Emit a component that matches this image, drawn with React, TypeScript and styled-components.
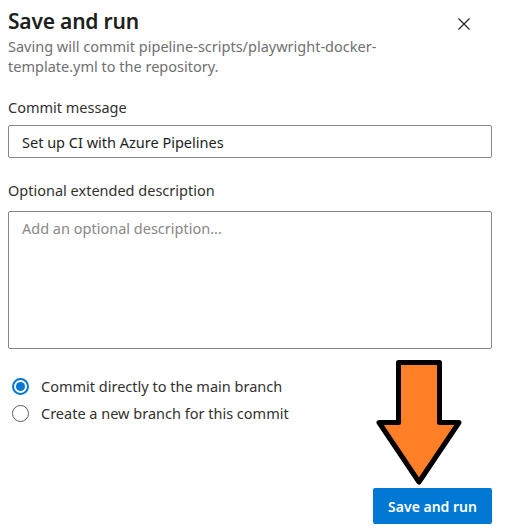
import styled, {createGlobalStyle} from 'styled-components';

const GlobalStyle = createGlobalStyle`
	body {
		margin: 0;
		background: #ffffff;
		font-family: 'Noto Sans', 'Open Sans', sans-serif;
		color: #323130;
	}
`;

const options = [
	{label: 'Commit directly to the main branch', checked: true},
	{label: 'Create a new branch for this commit', checked: false},
];

const CloseIcon = () => (
	<svg width='12' height='12' viewBox='0 0 12 12'>
		<path d='M0.5 0.5 L11.5 11.5 M11.5 0.5 L0.5 11.5' stroke='#201f1e' strokeWidth='1.1' />
	</svg>
);

const Arrow = () => (
	<ArrowLayer width='100' height='136' viewBox='0 0 100 136'>
		<polygon
			points='28.5,7.5 69.5,7.5 69.5,67.5 89,67.5 49,127 9,67.5 28.5,67.5'
			fill='#ff7f27'
			stroke='#000000'
			strokeWidth='5'
			strokeLinejoin='round'
		/>
	</ArrowLayer>
);

const App = () => {
	return (
		<>
			<GlobalStyle />
			<Panel>
				<Header>
					<Title>Save and run</Title>
					<CloseButton aria-label='Close'>
						<CloseIcon />
					</CloseButton>
				</Header>
				<Subtitle>
					Saving will commit pipeline-scripts/playwright-docker-
					<br />
					template.yml to the repository.
				</Subtitle>

				<Label>Commit message</Label>
				<TextInput defaultValue='Set up CI with Azure Pipelines' />

				<Label $top={22}>Optional extended description</Label>
				<TextArea placeholder='Add an optional description...' />

				<RadioGroup>
					{options.map((o) => (
						<RadioRow key={o.label}>
							<RadioCircle $checked={o.checked} />
							{o.label}
						</RadioRow>
					))}
				</RadioGroup>

				<Footer>
					<PrimaryButton>Save and run</PrimaryButton>
				</Footer>
				<Arrow />
			</Panel>
		</>
	);
};

const Panel = styled.div`
	position: relative;
	width: 508px;
	height: 532px;
	box-sizing: border-box;
	padding: 6px 16px 0 8px;
	display: flex;
	flex-direction: column;
`;

const Header = styled.div`
	display: flex;
	justify-content: space-between;
	align-items: flex-start;
`;

const Title = styled.h1`
	margin: 0;
	font-size: 21px;
	line-height: 30px;
	font-weight: 600;
	color: #201f1e;
	letter-spacing: -0.2px;
`;

const CloseButton = styled.button`
	border: none;
	background: none;
	padding: 0;
	margin: 12px 22px 0 0;
	width: 12px;
	height: 12px;
	display: flex;
	cursor: pointer;
`;

const Subtitle = styled.p`
	margin: 0;
	font-size: 14.5px;
	line-height: 20px;
	color: #707070;
`;

const Label = styled.div<{$top?: number}>`
	margin-top: ${(p) => p.$top ?? 21}px;
	font-size: 14.5px;
	line-height: 20px;
	color: #323130;
`;

const TextInput = styled.input`
	margin-top: 8px;
	height: 33px;
	box-sizing: border-box;
	border: 1px solid #8a8886;
	border-radius: 2px;
	padding: 0 13px;
	font-family: inherit;
	font-size: 14.5px;
	color: #201f1e;
	outline: none;
`;

const TextArea = styled.textarea`
	margin-top: 11px;
	height: 138px;
	box-sizing: border-box;
	border: 1px solid #8a8886;
	border-radius: 2px;
	padding: 6px 13px;
	font-family: inherit;
	font-size: 14.5px;
	line-height: 20px;
	resize: none;
	outline: none;
	&::placeholder {
		color: #8a8886;
	}
`;

const RadioGroup = styled.div`
	margin-top: 27px;
	display: flex;
	flex-direction: column;
	gap: 7px;
`;

const RadioRow = styled.label`
	display: flex;
	align-items: center;
	gap: 12px;
	padding-left: 4px;
	font-size: 14.5px;
	line-height: 20px;
	color: #323130;
	cursor: pointer;
`;

const RadioCircle = styled.span<{$checked: boolean}>`
	width: 17px;
	height: 17px;
	box-sizing: border-box;
	border-radius: 50%;
	position: relative;
	flex-shrink: 0;
	border: ${(p) => (p.$checked ? '2px solid #0078d4' : '1px solid #605e5c')};
	background: #fff;
	&::after {
		content: '';
		display: ${(p) => (p.$checked ? 'block' : 'none')};
		position: absolute;
		inset: 2px;
		border-radius: 50%;
		background: #0078d4;
	}
`;

const Footer = styled.div`
	margin-top: auto;
	margin-bottom: 8px;
	display: flex;
	justify-content: flex-end;
`;

const PrimaryButton = styled.button`
	width: 119px;
	height: 36px;
	border: none;
	border-radius: 2px;
	background: #0078d4;
	color: #ffffff;
	font-family: inherit;
	font-size: 14px;
	font-weight: 600;
	cursor: pointer;
`;

const ArrowLayer = styled.svg`
	position: absolute;
	left: 370px;
	top: 355px;
	pointer-events: none;
`;

export default App;
